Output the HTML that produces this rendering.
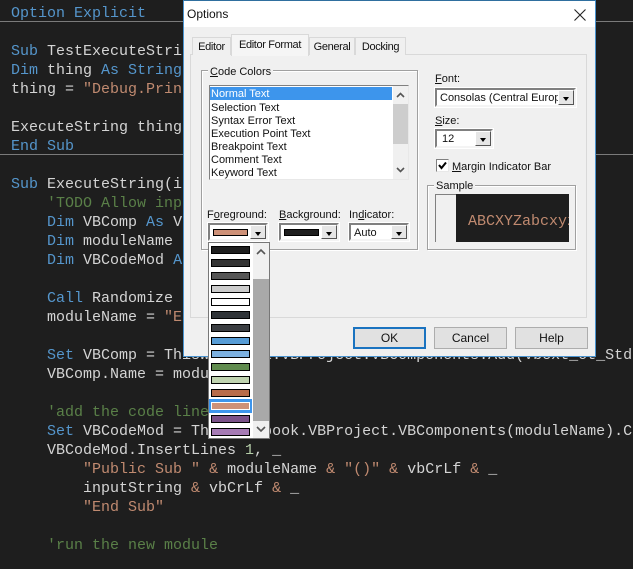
<!DOCTYPE html>
<html><head><meta charset="utf-8"><style>
html,body{margin:0;padding:0}
body{width:633px;height:569px;overflow:hidden;background:#1e1e1e;position:relative;font-family:"Liberation Sans",sans-serif;font-size:11px;color:#111}
pre{position:absolute;left:11px;top:4px;width:622px;height:560px;overflow:hidden;margin:0;font:15px/19px "Liberation Mono",monospace;color:#d4d4d4}
.k{color:#5596cc}.s{color:#c08a70}.c{color:#5a8048}.n{color:#b5cea8}
.a{position:absolute;box-sizing:border-box;white-space:nowrap}
.sep{position:absolute;left:0;width:633px;height:1px;background:#7a7a7a}
.t{position:absolute;white-space:nowrap;line-height:13px}
.tab{position:absolute;box-sizing:border-box;border:1px solid #d9d9d9;border-bottom:0;background:#f0f0f0;text-align:center;line-height:16px;padding-top:1px;letter-spacing:-.35px}
.grp{position:absolute;box-sizing:border-box;border:1px solid #a0a0a0;box-shadow:inset 1px 1px 0 #fff,1px 1px 0 #fff}
.leg{position:absolute;background:#f0f0f0;padding:0 2px;line-height:13px;white-space:nowrap}
.cb{position:absolute;box-sizing:border-box;background:#fff;border:2px solid;border-color:#808080 #f4f4f4 #f4f4f4 #808080;outline:1px solid #fff}
.ar{position:absolute;top:0;right:0;bottom:0;width:16px;background:#e6e6e6;border:1px solid;border-color:#fff #555 #555 #fff;box-sizing:border-box}
.ar:after{content:"";position:absolute;left:4px;top:6px;border:3px solid transparent;border-top:4px solid #000;border-bottom:0}
.sw{position:absolute;box-sizing:border-box;border:1px solid #000;height:7px}
.it{position:absolute;left:2px;width:39px;height:8px;box-sizing:border-box;border:1px solid #000}
.btn{position:absolute;box-sizing:border-box;background:#e1e1e1;border:1px solid #adadad;text-align:center;font-size:12px;line-height:20px;height:22px;width:73px;top:327px}
u{text-decoration:underline}
</style></head><body>
<pre><span class="k">Option Explicit</span>

<span class="k">Sub</span> TestExecuteString()
<span class="k">Dim</span> thing <span class="k">As String</span>
thing = <span class="s">"Debug.Print 1"</span>

ExecuteString thing
<span class="k">End Sub</span>

<span class="k">Sub</span> ExecuteString(inputString)
    <span class="c">'TODO Allow input</span>
    <span class="k">Dim</span> VBComp <span class="k">As</span> VBComponent
    <span class="k">Dim</span> moduleName
    <span class="k">Dim</span> VBCodeMod <span class="k">As</span> CodeModule

    <span class="k">Call</span> Randomize
    moduleName = <span class="s">"Exec"</span>

    <span class="k">Set</span> VBComp = ThisWorkbook.VBProject.VBComponents.Add(vbext_ct_StdModule)
    VBComp.Name = moduleName

    <span class="c">'add the code lines</span>
    <span class="k">Set</span> VBCodeMod = ThisWorkbook.VBProject.VBComponents(moduleName).CodeModule
    VBCodeMod.InsertLines <span class="n">1</span>, _
        <span class="s">"Public Sub "</span> <span class="s">&amp;</span> moduleName <span class="s">&amp;</span> <span class="s">"()"</span> <span class="s">&amp;</span> vbCrLf <span class="s">&amp;</span> _
        inputString <span class="s">&amp;</span> vbCrLf <span class="s">&amp;</span> _
        <span class="s">"End Sub"</span>

    <span class="c">'run the new module</span></pre>
<div class="sep" style="top:21px"></div>
<div class="sep" style="top:154px"></div>

<!-- dialog -->
<div class="a" style="left:183px;top:0;width:413px;height:357px;background:#f0f0f0;border:1px solid #4a94d0;border-top-color:#2f6f9f"></div>
<div class="a" style="left:184px;top:1px;width:411px;height:26px;background:#fff"></div>
<div class="t" style="left:187px;top:8px;font-size:12px">Options</div>
<svg class="a" style="left:573px;top:8px" width="14" height="14"><path d="M1.5 1.5L12.5 12.5M12.5 1.5L1.5 12.5" stroke="#222" stroke-width="1.1" fill="none"/></svg>

<div class="a" style="left:190px;top:54px;width:397px;height:264px;border:1px solid #d9d9d9;background:#f0f0f0"></div>
<div class="tab" style="left:192px;top:37px;width:39px;height:18px">Editor</div>
<div class="tab" style="left:231px;top:34px;width:78px;height:22px;background:#f5f5f5;border-bottom:0;line-height:18px">Editor Format</div>
<div class="tab" style="left:309px;top:37px;width:46px;height:18px">General</div>
<div class="tab" style="left:355px;top:37px;width:51px;height:18px">Docking</div>

<div class="grp" style="left:201px;top:70px;width:217px;height:180px"></div>
<div class="leg" style="left:208px;top:66px"><u>C</u>ode Colors</div>

<!-- list -->
<div class="a" style="left:209px;top:85px;width:200px;height:95px;background:#fff;border:1px solid;border-color:#808080 #e8e8e8 #e8e8e8 #808080"></div>
<div class="a" style="left:210px;top:87px;width:182px;height:13px;background:#3d95ec"></div>
<div class="t" style="left:211px;top:88px;color:#fff">Normal Text</div>
<div class="t" style="left:211px;top:102px">Selection Text</div>
<div class="t" style="left:211px;top:115px">Syntax Error Text</div>
<div class="t" style="left:211px;top:128px">Execution Point Text</div>
<div class="t" style="left:211px;top:141px">Breakpoint Text</div>
<div class="t" style="left:211px;top:154px">Comment Text</div>
<div class="t" style="left:211px;top:167px">Keyword Text</div>
<div class="a" style="left:393px;top:86px;width:15px;height:93px;background:#f0f0f0"></div>
<div class="a" style="left:393px;top:104px;width:15px;height:40px;background:#cdcdcd"></div>
<svg class="a" style="left:393px;top:90px" width="15" height="10"><path d="M4 7L7.5 3.5L11 7" stroke="#555" stroke-width="1.6" fill="none"/></svg>
<svg class="a" style="left:393px;top:165px" width="15" height="10"><path d="M4 3L7.5 6.5L11 3" stroke="#555" stroke-width="1.6" fill="none"/></svg>

<!-- colors -->
<div class="t" style="left:207px;top:209px"><span>F<u>o</u>reground:</span></div>
<div class="t" style="left:279px;top:209px"><u>B</u>ackground:</div>
<div class="t" style="left:349px;top:209px">In<u>d</u>icator:</div>
<div class="cb" style="left:208px;top:223px;width:60px;height:18px"><div class="sw" style="left:3px;top:4px;width:35px;background:#ce9178"></div><div class="ar"></div></div>
<div class="cb" style="left:279px;top:223px;width:60px;height:18px"><div class="sw" style="left:3px;top:4px;width:35px;background:#1e1e1e"></div><div class="ar"></div></div>
<div class="cb" style="left:349px;top:223px;width:60px;height:18px"><div class="t" style="left:3px;top:2px">Auto</div><div class="ar"></div></div>

<!-- font -->
<div class="t" style="left:435px;top:73px"><u>F</u>ont:</div>
<div class="cb" style="left:435px;top:88px;width:141px;height:19px;overflow:hidden"><div class="t" style="left:3px;top:2px;width:118px;overflow:hidden">Consolas (Central Europe)</div><div class="ar"></div></div>
<div class="t" style="left:435px;top:115px"><u>S</u>ize:</div>
<div class="cb" style="left:435px;top:129px;width:58px;height:19px"><div class="t" style="left:5px;top:2px">12</div><div class="ar"></div></div>
<div class="a" style="left:436px;top:159px;width:13px;height:13px;background:#fff;border:1px solid;border-color:#808080 #e8e8e8 #e8e8e8 #808080"></div>
<svg class="a" style="left:437px;top:160px" width="11" height="11"><path d="M2 5L4.5 8L9 2.5" stroke="#000" stroke-width="2" fill="none"/></svg>
<div class="t" style="left:452px;top:161px"><u>M</u>argin Indicator Bar</div>

<div class="grp" style="left:427px;top:185px;width:149px;height:65px"></div>
<div class="leg" style="left:434px;top:180px">Sample</div>
<div class="a" style="left:435px;top:194px;width:134px;height:48px;background:#f0f0f0;border-left:1px solid #808080;border-top:1px solid #808080"></div>
<div class="a" style="left:456px;top:194px;width:113px;height:48px;background:#1e1e1e;overflow:hidden"><div class="t" style="left:12px;top:18px;font:15px/19px 'Liberation Mono',monospace;color:#c08a70">ABCXYZabcxyz</div></div>

<div class="btn" style="left:353px;border:2px solid #1a73c0;line-height:18px">OK</div>
<div class="btn" style="left:434px">Cancel</div>
<div class="btn" style="left:515px">Help</div>

<!-- dropdown -->
<div class="a" style="left:208px;top:242px;width:62px;height:197px;background:#fff;border:1px solid #777;overflow:hidden">
<div class="a" style="left:44px;top:0;width:16px;height:195px;background:#f0f0f0"></div>
<div class="a" style="left:44px;top:36px;width:16px;height:142px;background:#a9a9a9"></div>
<svg class="a" style="left:44px;top:4px" width="16" height="10"><path d="M4 7L8 3L12 7" stroke="#555" stroke-width="1.6" fill="none"/></svg>
<svg class="a" style="left:44px;top:181px" width="16" height="10"><path d="M4 3L8 7L12 3" stroke="#555" stroke-width="1.6" fill="none"/></svg>
<div class="it" style="top:3px;background:#1e1e1e"></div>
<div class="it" style="top:16px;background:#333"></div>
<div class="it" style="top:29px;background:#555"></div>
<div class="it" style="top:42px;background:#ccc"></div>
<div class="it" style="top:55px;background:#fff"></div>
<div class="it" style="top:68px;background:#2f3337"></div>
<div class="it" style="top:81px;background:#3a3d41"></div>
<div class="it" style="top:94px;background:#569cd6"></div>
<div class="it" style="top:107px;background:#7db1e0"></div>
<div class="it" style="top:120px;background:#608b4e"></div>
<div class="it" style="top:133px;background:#c0d4b0"></div>
<div class="it" style="top:146px;background:#b96c4a"></div>
<div class="a" style="left:0;top:156px;width:43px;height:14px;background:#3d95ec"></div>
<div class="it" style="top:159px;background:#ce9178;border-color:#fff"></div>
<div class="it" style="top:172px;background:#7a5088"></div>
<div class="it" style="top:185px;background:#a67bb5"></div>
</div>
</body></html>
